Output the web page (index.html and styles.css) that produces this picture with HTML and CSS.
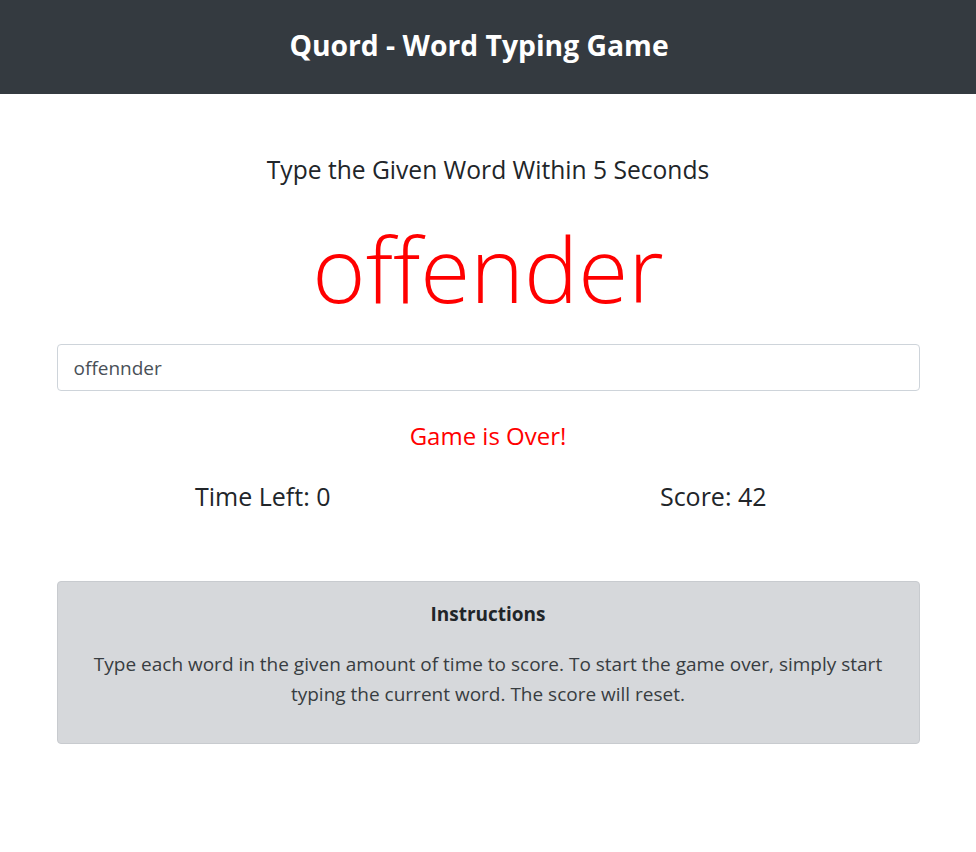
FILE: index.html
```html
<!DOCTYPE html>
<html lang="en">
<head>
<meta charset="utf-8">
<title>Quord - Word Typing Game</title>
<link rel="stylesheet" href="styles.css">
</head>
<body>
<header class="topbar">
  <h1 class="brand">Quord - Word Typing Game</h1>
</header>
<main class="game">
  <h4 class="prompt">Type the Given Word Within 5 Seconds</h4>
  <h2 class="word">offender</h2>
  <input class="word-input" type="text" value="offennder">
  <h4 class="status">Game is Over!</h4>
  <div class="stats">
    <h3 class="stat">Time Left: 0</h3>
    <h3 class="stat">Score: 42</h3>
  </div>
  <section class="instructions">
    <h5 class="instructions-title">Instructions</h5>
    <p class="instructions-text">Type each word in the given amount of time to score. To start the game over, simply start typing the current word. The score will reset.</p>
  </section>
</main>
</body>
</html>
```

FILE: styles.css
```css
* { box-sizing: border-box; }
html, body {
  margin: 0;
  padding: 0;
  background: #fff;
  color: #212529;
  font-family: "Open Sans", "Noto Sans", "Liberation Sans", sans-serif;
}
.topbar {
  height: 94px;
  background: #343a40;
  display: flex;
  align-items: center;
  justify-content: center;
  padding: 0 18px 4px 0;
}
.brand {
  margin: 0;
  color: #fff;
  font-size: 28.3px;
  font-weight: 700;
  line-height: 1;
}
.game {
  width: 863px;
  margin: 0 auto;
  padding-top: 61px;
}
.prompt {
  margin: 0;
  text-align: center;
  font-size: 24.6px;
  font-weight: 500;
  line-height: 29px;
}
.word {
  margin: 24px 0 0;
  text-align: center;
  color: #ff0000;
  font-size: 91px;
  font-weight: 300;
  line-height: 120px;
}
.word-input {
  display: block;
  width: 100%;
  height: 47px;
  margin-top: 16px;
  padding: 0 16px;
  border: 1px solid #ced4da;
  border-radius: 4px;
  font-family: inherit;
  font-size: 19px;
  color: #495057;
  background: #fff;
}
.status {
  margin: 30px 0 0;
  text-align: center;
  color: #ff0000;
  font-size: 24px;
  font-weight: 500;
  line-height: 29px;
}
.stats {
  display: grid;
  grid-template-columns: 1fr 1fr;
  margin: 31px -19px 0;
}
.stat {
  margin: 0;
  text-align: center;
  font-size: 25px;
  font-weight: 500;
  line-height: 30px;
}
.instructions {
  margin-top: 70px;
  background: #d6d8db;
  border: 1px solid #c8cbcf;
  border-radius: 4px;
  padding: 20px 20px 34px;
  text-align: center;
  color: #383d41;
}
.instructions-title {
  margin: 0;
  font-size: 19px;
  font-weight: 700;
  line-height: 24px;
  color: #212529;
}
.instructions-text {
  margin: 23px 0 0;
  font-size: 19px;
  line-height: 30px;
}
```
